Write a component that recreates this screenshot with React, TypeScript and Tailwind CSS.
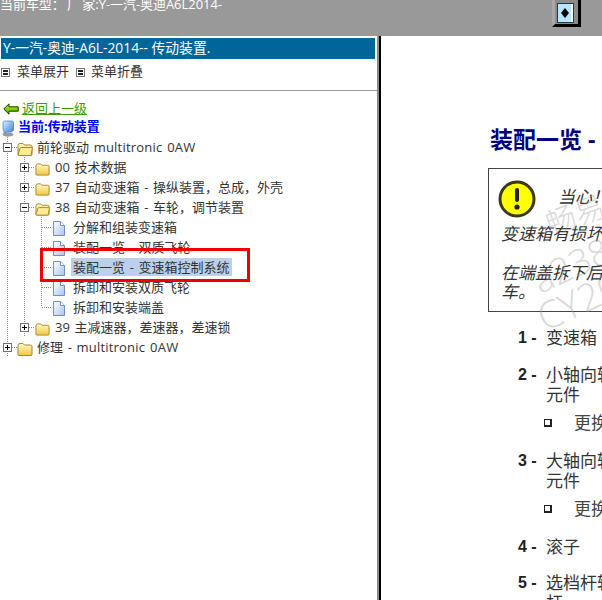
const sans = "font-['Tahoma','Open_Sans','Noto_Sans_CJK_SC',sans-serif]";

type Cell = "guide" | "plus" | "minus" | "tee" | "end";

function TreeCell({ type }: { type: Cell }) {
  const isBox = type === "plus" || type === "minus";
  return (
    <svg width="17" height="20" className="shrink-0" shapeRendering="crispEdges">
      <path
        d={type === "end" ? "M7.5 0V10" : "M7.5 0V20"}
        stroke="#888"
        strokeWidth="1"
        strokeDasharray="1 1"
        fill="none"
      />
      {(type === "tee" || type === "end") && <path d="M8 10.5H17" stroke="#888" strokeDasharray="1 1" fill="none" />}
      {isBox && (
        <>
          <path d="M12 10.5H17" stroke="#888" strokeDasharray="1 1" fill="none" />
          <rect x="3.5" y="6.5" width="8" height="8" fill="#fff" stroke="#707070" />
          <path d="M5 10.5H10" stroke="#000" />
          {type === "plus" && <path d="M7.5 8V13" stroke="#000" />}
        </>
      )}
    </svg>
  );
}

function Folder({ open, small }: { open?: boolean; small?: boolean }) {
  return (
    <svg width={small ? 15 : 16} height="14" viewBox="0 0 16 14" className={"mt-[3px] shrink-0 " + (small ? "ml-[1px]" : "")}>
      <defs>
        <linearGradient id="fd" x1="0" y1="0" x2="0" y2="1">
          <stop offset="0" stopColor="#fff9c8" />
          <stop offset="1" stopColor="#f4c640" />
        </linearGradient>
      </defs>
      <path d="M1 12.5V3.5Q1 1.5 3 1.5H6L7.5 3H13.5Q15 3 15 4.5V12.5Q15 13.5 14 13.5H2Q1 13.5 1 12.5Z" fill="url(#fd)" stroke="#a5852f" />
      {open && <path d="M1 13L3 6.5Q3.3 5.5 4.5 5.5H15.5L14 13Q13.8 13.5 13 13.5H2Z" fill="#ffeb94" stroke="#a5852f" />}
    </svg>
  );
}

function Doc() {
  return (
    <svg width="14" height="15" viewBox="0 0 14 15" className="mt-[3px] shrink-0">
      <defs>
        <linearGradient id="dc" x1="0" y1="0" x2="1" y2="1">
          <stop offset="0" stopColor="#ffffff" />
          <stop offset="1" stopColor="#a9c4ee" />
        </linearGradient>
      </defs>
      <path d="M2.5 0.5H9.5L13.5 4.5V14.5H2.5Z" fill="url(#dc)" stroke="#6f8fc4" />
      <path d="M9.5 0.5V4.5H13.5" fill="#fff" stroke="#6f8fc4" />
    </svg>
  );
}

function Row({ cells, icon, label, selected }: { cells: Cell[]; icon: "open" | "closed" | "doc"; label: string; selected?: boolean }) {
  const small = cells.length === 2;
  return (
    <div className="flex h-5 items-center">
      {cells.map((c, i) => (
        <TreeCell key={i} type={c} />
      ))}
      {icon === "doc" ? <Doc /> : <Folder open={icon === "open"} small={small} />}
      <span
        className={
          "whitespace-nowrap px-[2px] text-[13px] leading-[18px] text-[#333] [word-spacing:1.3px] " +
          (icon === "doc" ? "ml-[6px] " : small ? "ml-[3px] " : "ml-[2px] ") +
          (selected ? "bg-[#bcd0ea]" : "")
        }
      >
        {label.includes("multitronic") ? (
          <>
            {label.split("multitronic")[0]}
            <span className="tracking-[0.2px]">multitronic{label.split("multitronic")[1]}</span>
          </>
        ) : (
          label
        )}
      </span>
    </div>
  );
}

function ListItem({ n, children }: { n: string; children: React.ReactNode }) {
  return (
    <div className="flex">
      <span className="w-[28px] shrink-0 font-['Liberation_Sans',sans-serif] text-[16px] font-bold leading-5 text-[#222]">{n} -</span>
      <div className="whitespace-nowrap text-[17px] leading-5 text-[#333]">{children}</div>
    </div>
  );
}

function SubItem() {
  return (
    <div className="ml-[26px] flex h-5 items-center">
      <span className="box-border h-[8px] w-[8px] border border-r-2 border-b-2 border-[#222]" />
      <span className="ml-[22px] text-[17px] leading-5 text-[#444]">更换</span>
    </div>
  );
}

function MenuBox() {
  return (
    <span className="flex h-[9px] w-[9px] items-center justify-center border border-[#777]">
      <span className="h-[5px] w-[5px] border-y-2 border-[#222]" />
    </span>
  );
}

export default function App() {
  return (
    <div className={"relative flex h-[600px] w-[602px] flex-col overflow-hidden bg-white " + sans}>
      {/* top bar */}
      <div className="flex h-9 shrink-0 items-start justify-between overflow-hidden bg-[#999999] pr-[21px]">
        <div className="-mt-[6px] whitespace-nowrap text-[13px] leading-5 tracking-[-0.05px] text-white [word-spacing:-1px]">当前车型： 厂 家:Y-一汽-奥迪A6L2014-</div>
        <div className="box-border flex h-[27px] w-[29px] items-start justify-start border-y-[3px] border-x-[3px] border-t-0 border-l-[#a8a8a8] border-r-black border-b-black bg-[#8c8c8c] pl-[2px] pt-[3px]">
          <div className="flex h-[20px] w-[17px] border border-[#333] bg-[#b4e6ff]">
            <div className="flex flex-1 items-center justify-center">
              <svg width="8" height="10" viewBox="0 0 8 10">
                <path d="M4 0L8 5L4 10L0 5Z" fill="#000" />
              </svg>
            </div>
            <div className="w-[2px] bg-white" />
          </div>
        </div>
      </div>

      <div className="flex min-h-0 flex-1">
        {/* left menu */}
        <div className="w-[377px] shrink-0 pl-[1px] pt-[2px]">
          <div className="mr-[2px] flex h-[21px] items-center bg-[#006699] pl-[2px] text-[13.8px] text-white">
            Y-一汽-奥迪-A6L-2014-- 传动装置.
          </div>
          <div className="flex h-[26px] items-center text-[13px] text-[#333]">
            <MenuBox />
            <span className="ml-[7px]">菜单展开</span>
            <span className="ml-[7px]">
              <MenuBox />
            </span>
            <span className="ml-[6px]">菜单折叠</span>
          </div>
          <div className="-ml-[1px] mt-[5px] border-t border-[#999]" />
          <div className="mt-[9px] flex h-[18px] items-center pl-[2px]">
            <svg width="16" height="12" viewBox="0 0 16 12">
              <defs>
                <linearGradient id="ar" x1="0" y1="0" x2="0" y2="1">
                  <stop offset="0" stopColor="#d8f000" />
                  <stop offset="1" stopColor="#3fa800" />
                </linearGradient>
              </defs>
              <path d="M6 0.8L0.8 6L6 11.2V8.2H15.2V3.8H6Z" fill="url(#ar)" stroke="#0a3d00" />
            </svg>
            <span className="ml-[3px] text-[13px] text-[#3d9a00] underline">返回上一级</span>
          </div>
          <div className="flex h-[18px] items-center">
            <svg width="16" height="17" viewBox="0 0 16 17" className="mt-[2px] shrink-0">
              <defs>
                <linearGradient id="pc" x1="0" y1="0" x2="1" y2="1">
                  <stop offset="0" stopColor="#dff0ff" />
                  <stop offset="1" stopColor="#2f7fe0" />
                </linearGradient>
              </defs>
              <ellipse cx="7" cy="14.5" rx="5.5" ry="2" fill="#9a9a9a" />
              <path d="M2 2.5Q2 1 4 1H11Q12.5 1 12.5 2.5V10Q12.5 11 10 12H5V13H3V11Q2 10 2 9Z" fill="url(#pc)" stroke="#4a78b0" strokeWidth="0.7" />
            </svg>
            <span className="ml-[1px] text-[13px] font-bold text-[#0000ff]">当前:传动装置</span>
          </div>
          <div className="-ml-[1px] mt-[1px]">
            <Row cells={["minus"]} icon="open" label="前轮驱动 multitronic 0AW" />
            <Row cells={["guide", "plus"]} icon="closed" label="00 技术数据" />
            <Row cells={["guide", "plus"]} icon="closed" label="37 自动变速箱 - 操纵装置，总成，外壳" />
            <Row cells={["guide", "minus"]} icon="open" label="38 自动变速箱 - 车轮，调节装置" />
            <Row cells={["guide", "guide", "tee"]} icon="doc" label="分解和组装变速箱" />
            <Row cells={["guide", "guide", "tee"]} icon="doc" label="装配一览 - 双质飞轮" />
            <Row cells={["guide", "guide", "tee"]} icon="doc" label="装配一览 - 变速箱控制系统" selected />
            <Row cells={["guide", "guide", "tee"]} icon="doc" label="拆卸和安装双质飞轮" />
            <Row cells={["guide", "guide", "end"]} icon="doc" label="拆卸和安装端盖" />
            <Row cells={["guide", "plus"]} icon="closed" label="39 主减速器，差速器，差速锁" />
            <Row cells={["plus"]} icon="closed" label="修理 - multitronic 0AW" />
          </div>
        </div>

        {/* divider */}
        <div className="h-full w-[4px] shrink-0 border-l-2 border-r-2 border-l-[#8a8a8a] border-r-black" />

        {/* document */}
        <div className="min-w-0 flex-1 overflow-hidden pl-[107px] pt-[89px]">
          <div className="w-[400px]">
            <h1 className="ml-[2px] whitespace-nowrap text-[23px] font-bold leading-7 text-[#000080]">装配一览 - 变速箱控制系统</h1>
            <div className="mt-[15px] h-[144px] border border-[#444] pl-[9px] pt-[11px] text-[17px] italic leading-5 text-[#333]">
              <div className="flex h-[38px] items-start">
                <svg width="38" height="38" viewBox="0 0 38 38" className="shrink-0">
                  <circle cx="19" cy="19" r="17" fill="#ffff00" stroke="#3a3a1a" strokeWidth="3" />
                  <rect x="17" y="8" width="4" height="14" rx="2" fill="#222" />
                  <circle cx="19" cy="27" r="2.6" fill="#222" />
                </svg>
                <span className="ml-[22px] mt-[7px]">当心！</span>
              </div>
              <div className="mt-[6px] whitespace-nowrap pl-[3px]">变速箱有损坏危险</div>
              <div className="mt-[19px] whitespace-nowrap pl-[3px] leading-[19px]">在端盖拆下后，不允许移动汽</div>
              <div className="pl-[3px] leading-[19px]">车。</div>
            </div>
            <div className="ml-[30px] mt-[16px]">
              <ListItem n="1">变速箱</ListItem>
              <div className="h-[17px]" />
              <ListItem n="2">
                小轴向轴承
                <br />
                元件
              </ListItem>
              <div className="h-[8px]" />
              <SubItem />
              <div className="h-[18px]" />
              <ListItem n="3">
                大轴向轴承
                <br />
                元件
              </ListItem>
              <div className="h-[8px]" />
              <SubItem />
              <div className="h-[18px]" />
              <ListItem n="4">滚子</ListItem>
              <div className="h-[16px]" />
              <ListItem n="5">
                选档杆轴承
                <br />
                杆
              </ListItem>
            </div>
          </div>
        </div>
      </div>

      {/* red annotation box */}
      <div className="absolute left-[40px] top-[248px] h-[34px] w-[210px] border-[3px] border-[#ee0000]" />

      {/* watermark */}
      <div className="pointer-events-none absolute left-[545px] top-[192px] -rotate-[20deg] whitespace-nowrap text-[30px] font-light text-[#9a9a9a]/40">畅易</div>
      <div className="pointer-events-none absolute left-[530px] top-[234px] -rotate-[25deg] whitespace-nowrap font-['Open_Sans',sans-serif] text-[36px] font-light text-[#9a9a9a]/40">a2388</div>
      <div className="pointer-events-none absolute left-[535px] top-[272px] -rotate-[25deg] whitespace-nowrap font-['Open_Sans',sans-serif] text-[38px] font-light text-[#9a9a9a]/40">CY20</div>
    </div>
  );
}
